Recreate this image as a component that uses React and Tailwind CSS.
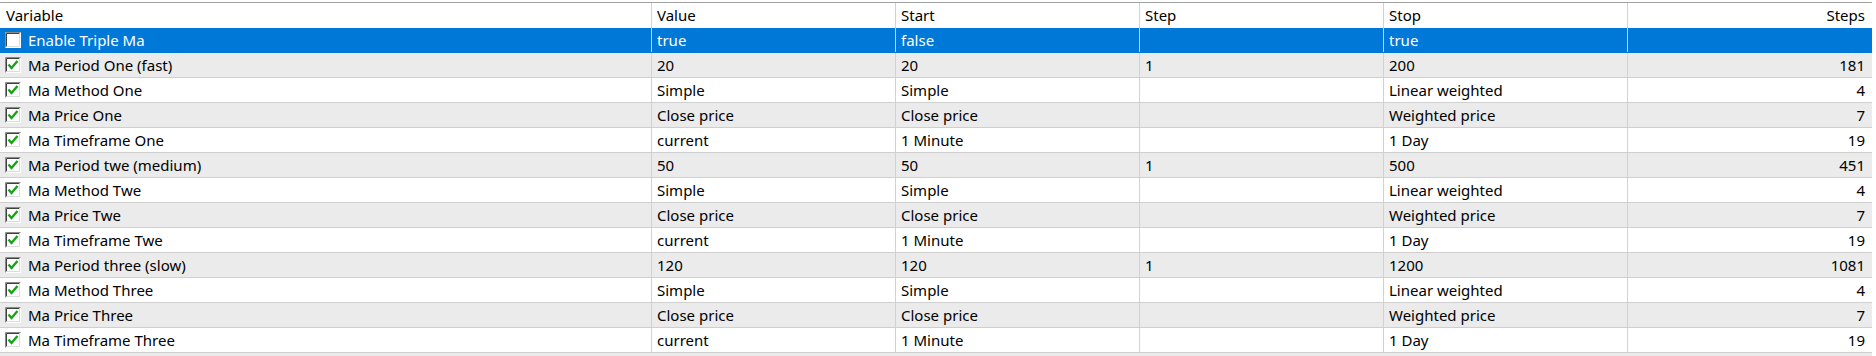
import React from 'react';

const rows = [
  ['Enable Triple Ma', 'true', 'false', '', 'true', '', false],
  ['Ma Period One (fast)', '20', '20', '1', '200', '181', true],
  ['Ma Method One', 'Simple', 'Simple', '', 'Linear weighted', '4', true],
  ['Ma Price One', 'Close price', 'Close price', '', 'Weighted price', '7', true],
  ['Ma Timeframe One', 'current', '1 Minute', '', '1 Day', '19', true],
  ['Ma Period twe (medium)', '50', '50', '1', '500', '451', true],
  ['Ma Method Twe', 'Simple', 'Simple', '', 'Linear weighted', '4', true],
  ['Ma Price Twe', 'Close price', 'Close price', '', 'Weighted price', '7', true],
  ['Ma Timeframe Twe', 'current', '1 Minute', '', '1 Day', '19', true],
  ['Ma Period three (slow)', '120', '120', '1', '1200', '1081', true],
  ['Ma Method Three', 'Simple', 'Simple', '', 'Linear weighted', '4', true],
  ['Ma Price Three', 'Close price', 'Close price', '', 'Weighted price', '7', true],
  ['Ma Timeframe Three', 'current', '1 Minute', '', '1 Day', '19', true],
];

function CheckBox({ checked }) {
  return (
    <svg width="16" height="16" viewBox="0 0 16 16" className="shrink-0">
      <rect x="0" y="0" width="16" height="16" fill="#ffffff" />
      <path d="M0.5 15.5V0.5H15.5" stroke="#8a8a8a" fill="none" />
      <path d="M1.5 14.5V1.5H14.5" stroke="#404040" fill="none" />
      <path d="M1.5 14.5H14.5V1.5" stroke="#dcdcdc" fill="none" />
      {checked && (
        <path d="M3.5 7.5L6.5 11L12.5 4" stroke="#17a117" strokeWidth="2.4" fill="none" />
      )}
    </svg>
  );
}

function Cell({ children, className = '' }) {
  return (
    <div className={`h-full flex items-center border-l border-[#d2d2d2] px-[5px] ${className}`}>
      {children}
    </div>
  );
}

export default function App() {
  return (
    <div
      className="w-[1876px] h-[356px] overflow-hidden bg-white text-[15px] text-black"
      style={{ fontFamily: '"Noto Sans", "Open Sans", Arial, sans-serif' }}
    >
      <div className="h-[2px]" />
      <div className="w-[1872px] border-t border-[#a0a0a0]">
        <div className="grid grid-cols-[651px_244px_244px_244px_244px_245px] h-[25px] bg-white">
          <div className="h-full flex items-center px-[6px]">Variable</div>
          <Cell>Value</Cell>
          <Cell>Start</Cell>
          <Cell>Step</Cell>
          <Cell>Stop</Cell>
          <Cell className="justify-end pr-[7px]">Steps</Cell>
        </div>
        {rows.map((r, i) => {
          const selected = i === 0;
          const bg = selected
            ? 'bg-[#0078d7] text-white border-[#0078d7]'
            : i % 2 === 1
            ? 'bg-[#ebebeb] border-[#cfcfcf]'
            : 'bg-white border-[#cfcfcf]';
          return (
            <div
              key={i}
              className={`grid grid-cols-[651px_244px_244px_244px_244px_245px] h-[25px] border-b ${bg}`}
            >
              <div className="h-full flex items-center gap-[7px] pl-[5px]">
                <CheckBox checked={r[6]} />
                <span>{r[0]}</span>
              </div>
              <Cell>{r[1]}</Cell>
              <Cell>{r[2]}</Cell>
              <Cell>{r[3]}</Cell>
              <Cell>{r[4]}</Cell>
              <Cell className="justify-end pr-[7px]">{r[5]}</Cell>
            </div>
          );
        })}
        <div className="h-[10px] bg-[#ebebeb]" />
      </div>
    </div>
  );
}
